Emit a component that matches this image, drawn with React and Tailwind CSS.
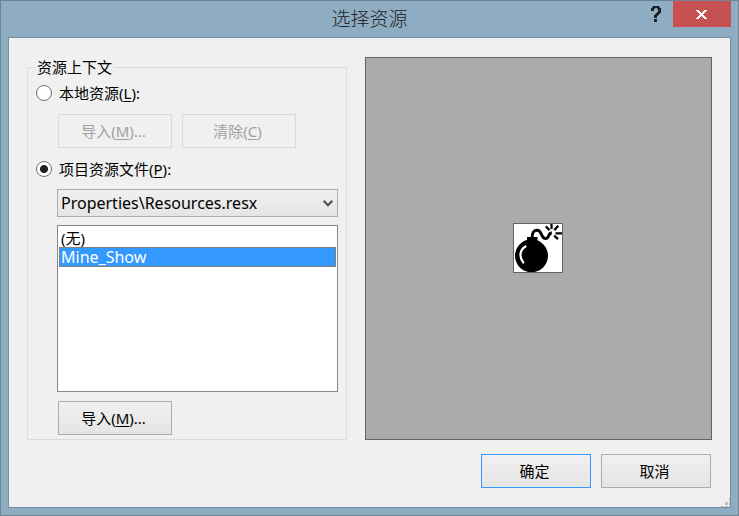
import { useState } from "react";

const pushButton =
  "flex h-[34px] items-center justify-center border bg-gradient-to-b from-[#f0f0f0] to-[#e5e5e5] pr-[3px] pb-px disabled:border-[#d9d9d9] disabled:bg-none disabled:text-[#a0a0a0]";

function Mnemonic({ text, letter, tail }) {
  return (
    <span className="whitespace-nowrap">
      {text}(<span className="underline decoration-1 underline-offset-2">{letter}</span>){tail}
    </span>
  );
}

function Radio({ checked, onChange, children }) {
  return (
    <label className="flex h-5 items-center gap-[7px]">
      <input
        type="radio"
        name="context"
        checked={checked}
        onChange={onChange}
        className="size-4 shrink-0 appearance-none rounded-full border border-[#707070] bg-white checked:bg-[radial-gradient(circle,#222_0,#222_3.6px,#fff_4.4px)]"
      />
      {children}
    </label>
  );
}

function Bomb() {
  return (
    <svg viewBox="0 0 48 48" className="size-12" role="img" aria-label="Mine_Show">
      <circle cx="17.5" cy="31.8" r="16.5" />
      <path d="M13 13h10.500v5h-10.500z" />
      <path
        d="M18.200 13.500C18 8.500 20 6.200 23 6.200C28.500 6.200 26.500 14.600 31.500 14.600C35.500 14.600 33.500 9.500 37.800 8.800"
        fill="none"
        stroke="#000"
        strokeWidth="2.900"
      />
      <path
        d="M11.500 22.500C5.500 26 5 33 9.200 38.500"
        fill="none"
        stroke="#fff"
        strokeWidth="2.200"
        strokeLinecap="round"
      />
      <path
        d="M37.500 0v5M31.800 2.200l3.700 4M44.300 1.800l-4 4.300M41.500 9.300h6.500M40.200 11.700l3.800 3.500"
        fill="none"
        stroke="#000"
        strokeWidth="2.300"
      />
    </svg>
  );
}

export default function App() {
  const [context, setContext] = useState("project");
  const [resource, setResource] = useState("Mine_Show");

  return (
    <div className="flex min-h-screen flex-col border border-[#6f8597] bg-[#8eacc2] px-[7px] pb-[7px] font-['Noto_Sans','Noto_Sans_CJK_SC',sans-serif] text-[15px] leading-5 text-black">
      <header className="grid h-9 shrink-0 grid-cols-[1fr_auto_1fr] items-start">
        <h1 className="col-start-2 pt-[3px] font-['Noto_Sans_CJK_SC',sans-serif] text-[19px] leading-7 font-light text-[#222]">
          选择资源
        </h1>
        <div className="flex justify-end">
          <button type="button" aria-label="帮助" className="flex h-[26px] w-[34px] items-center justify-center">
            <svg viewBox="0 0 10 16" className="h-4 w-[10px]" shapeRendering="crispEdges" fill="#222">
              <path d="M1 1h1V0h6v1h1v1h1v5H9v1H8v1H7v1H6v2H3V9h1V8h1V7h1V6h1V3H6V2H4v1H3v2H0V2h1zM3 13h3v3H3z" />
            </svg>
          </button>
          <button type="button" aria-label="关闭" className="flex h-[26px] w-[58px] items-center justify-center bg-[#c75050] pr-px">
            <svg viewBox="0 0 11 9" className="h-[9px] w-[11px]" shapeRendering="crispEdges" fill="#fff">
              <path d="M0 0h3v1h1v1h1v1h1V2h1V1h1V0h3v1h-1v1H9v1H8v1H7v1h1v1h1v1h1v1h1v1H8V8H7V7H6V6H5v1H4v1H3v1H0V8h1V7h1V6h1V5h1V4H3V3H2V2H1V1H0z" />
            </svg>
          </button>
        </div>
      </header>

      <main className="relative flex grow flex-col border border-[#7390a7] bg-[#f0f0f0] px-[18px] py-[19px]">
        <div className="grid grow grid-cols-[320fr_347fr] gap-[18px]">
          <fieldset className="min-w-0 border border-[#dcdcdc] px-[7px] pb-1">
            <legend className="px-[2px]">资源上下文</legend>
            <div className="flex flex-col px-px pt-[6px]">
              <Radio checked={context === "local"} onChange={() => setContext("local")}>
                <Mnemonic text="本地资源" letter="L" tail=":" />
              </Radio>
              <div className="mt-[11px] flex gap-[10px] pl-[22px]">
                <button
                  type="button"
                  disabled={context !== "local"}
                  className={`${pushButton} w-[114px] border-[#acacac]`}
                >
                  <Mnemonic text="导入" letter="M" tail="..." />
                </button>
                <button
                  type="button"
                  disabled={context !== "local"}
                  className={`${pushButton} w-[114px] border-[#acacac]`}
                >
                  <Mnemonic text="清除" letter="C" />
                </button>
              </div>
              <div className="mt-[11px]">
                <Radio checked={context === "project"} onChange={() => setContext("project")}>
                  <Mnemonic text="项目资源文件" letter="P" tail=":" />
                </Radio>
              </div>
              <div className="mt-[10px] flex flex-col gap-2 pl-[21px]">
                <div className="grid">
                  <select
                    aria-label="项目资源文件"
                    className="col-start-1 row-start-1 h-7 w-full appearance-none border border-[#acacac] bg-gradient-to-b from-[#f0f0f0] to-[#e5e5e5] pl-[3px] text-base leading-5"
                  >
                    <option>Properties\Resources.resx</option>
                  </select>
                  <svg
                    viewBox="0 0 10 7"
                    className="pointer-events-none col-start-1 row-start-1 mr-[5px] h-[7px] w-[10px] self-center justify-self-end"
                    fill="none"
                    stroke="#555"
                    strokeWidth="2.200"
                  >
                    <path d="M.7 .8L5 5.200L9.300 .8" />
                  </svg>
                </div>
                <select
                  size={8}
                  aria-label="资源"
                  value={resource}
                  onChange={(e) => setResource(e.target.value)}
                  className="h-[167px] w-full overflow-hidden border border-[#828790] bg-white p-px text-base leading-5"
                >
                  <option value="" className="flex h-5 min-h-0 items-center px-[2px] py-0 text-[15px]">
                    (无)
                  </option>
                  <option
                    value="Mine_Show"
                    className="flex h-5 min-h-0 items-center border border-dotted border-transparent px-px py-0 checked:border-[#cc6600] checked:bg-[linear-gradient(#3399ff,#3399ff)] checked:[-webkit-text-fill-color:white]"
                  >
                    Mine_Show
                  </option>
                </select>
              </div>
              <div className="mt-[9px] pl-[22px]">
                <button type="button" className={`${pushButton} w-[114px] border-[#acacac]`}>
                  <Mnemonic text="导入" letter="M" tail="..." />
                </button>
              </div>
            </div>
          </fieldset>

          <div className="flex items-center justify-center border border-[#646464] bg-[#ababab] pr-px pb-px">
            <div className="border border-[#646464] bg-white">
              <Bomb />
            </div>
          </div>
        </div>

        <footer className="flex justify-end gap-[10px] pt-[14px] pr-px">
          <button type="button" className={`${pushButton} w-[110px] border-[#3399ff]`}>
            确定
          </button>
          <button type="button" className={`${pushButton} w-[110px] border-[#acacac]`}>
            取消
          </button>
        </footer>

        <svg viewBox="0 0 9 9" className="absolute right-0 bottom-0 size-[9px]" shapeRendering="crispEdges" fill="#bfbfbf">
          <path d="M8 0h1v3h-1zM4 4h3v3h-3zM8 4h1v3h-1zM0 8h3v1h-3zM4 8h3v1h-3zM8 8h1v1h-1z" />
        </svg>
      </main>
    </div>
  );
}
